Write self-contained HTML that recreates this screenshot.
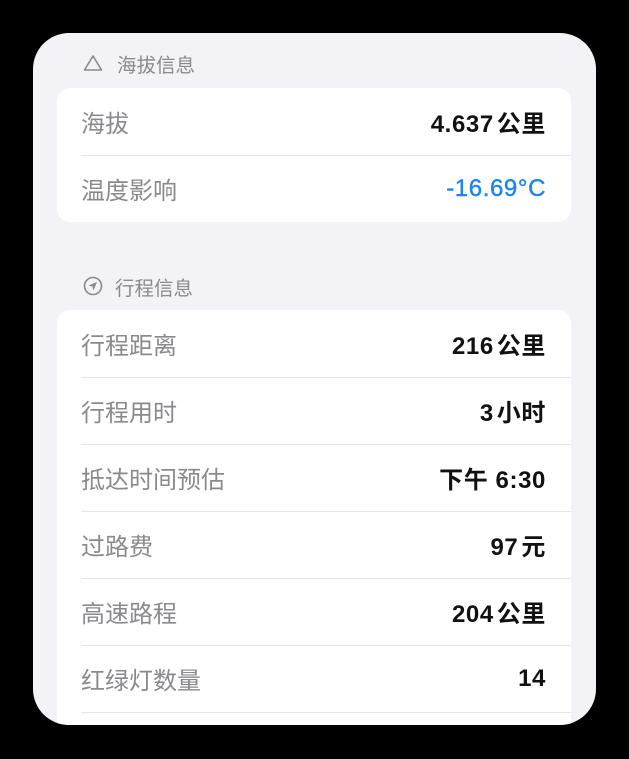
<!DOCTYPE html>
<html><head><meta charset="utf-8"><style>
*{margin:0;padding:0;box-sizing:border-box}
body{width:629px;height:759px;background:#000;position:relative;overflow:hidden;font-family:"Liberation Sans","Noto Sans CJK SC",sans-serif}
.panel{position:absolute;left:33px;top:33px;width:563px;height:692px;background:#f2f2f7;border-radius:36px;overflow:hidden}
.hdr{position:absolute;left:50px;font-size:19.5px;color:#8a8a8e;display:flex;align-items:center;gap:14px;height:24px}
.card{position:absolute;left:24px;width:514px;background:#fff;border-radius:13px}
.row{height:67px;position:relative;display:flex;align-items:center;justify-content:space-between;padding:0 25px 0 24px}
.row+.row::before{content:"";position:absolute;left:24px;right:0;top:0;height:1px;background:#e6e6ea}
.l{font-size:24px;color:#8a8a8e}
.v{font-size:24px;font-weight:bold;color:#111;letter-spacing:0.6px}
.v i{font-style:normal;margin-left:3px}
.b{color:#1a84f0;font-weight:normal;-webkit-text-stroke:0.4px #1a84f0}
</style></head><body>
<div class="panel">
 <div class="hdr" style="top:18px">
  <svg width="20" height="18" viewBox="0 0 20 18"><path d="M10 2 L18.5 16 H1.5 Z" fill="none" stroke="#8a8a8e" stroke-width="1.6" stroke-linejoin="round"/></svg>
  <span>海拔信息</span></div>
 <div class="card" style="top:55px">
  <div class="row"><span class="l">海拔</span><span class="v">4.637<i>公里</i></span></div>
  <div class="row"><span class="l">温度影响</span><span class="v b">-16.69°C</span></div>
 </div>
 <div class="hdr" style="top:241px;gap:12px">
  <svg width="20" height="20" viewBox="0 0 20 20"><circle cx="10" cy="10" r="8.5" fill="none" stroke="#8a8a8e" stroke-width="1.6"/><path d="M14 6 L5.5 9.5 L9.5 10.5 L10.5 14.5 Z" fill="#8a8a8e"/></svg>
  <span>行程信息</span></div>
 <div class="card" style="top:277px;height:430px">
  <div class="row"><span class="l">行程距离</span><span class="v">216<i>公里</i></span></div>
  <div class="row"><span class="l">行程用时</span><span class="v">3<i>小时</i></span></div>
  <div class="row"><span class="l">抵达时间预估</span><span class="v">下午 6:30</span></div>
  <div class="row"><span class="l">过路费</span><span class="v">97<i>元</i></span></div>
  <div class="row"><span class="l">高速路程</span><span class="v">204<i>公里</i></span></div>
  <div class="row"><span class="l">红绿灯数量</span><span class="v">14</span></div>
  <div class="row" style="height:10px"></div>
 </div>
</div>
</body></html>
